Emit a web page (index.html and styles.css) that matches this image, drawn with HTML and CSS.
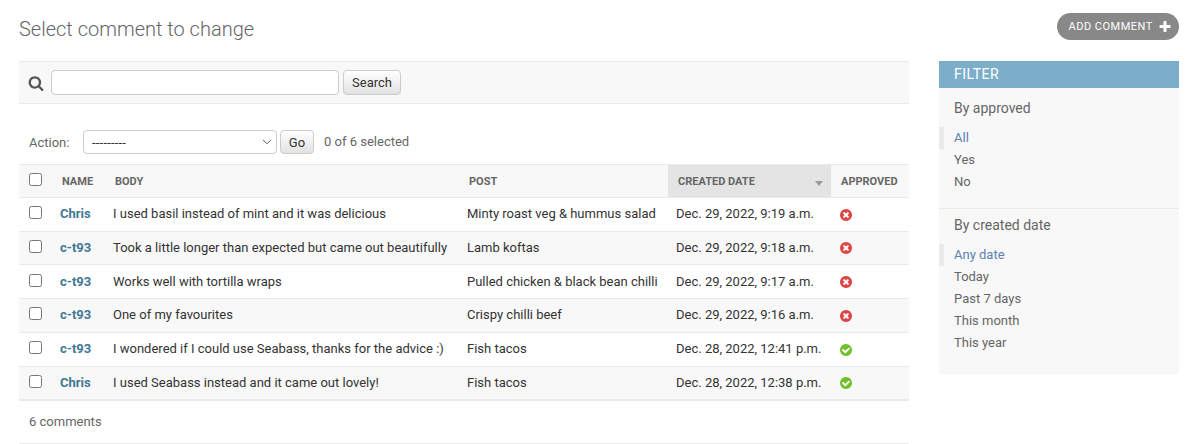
FILE: index.html
```html
<!DOCTYPE html>
<html lang="en">
<head>
<meta charset="utf-8">
<title>Select comment to change</title>
<link rel="stylesheet" href="styles.css">
</head>
<body>
<svg class="defs" aria-hidden="true">
  <symbol id="no" viewBox="0 0 1792 1792"><path d="M1277 1122q0-26-19-45l-181-181 181-181q19-19 19-45 0-27-19-46l-90-90q-19-19-46-19-26 0-45 19l-181 181-181-181q-19-19-45-19-27 0-46 19l-90 90q-19 19-19 46 0 26 19 45l181 181-181 181q-19 19-19 45 0 27 19 46l90 90q19 19 46 19 26 0 45-19l181-181 181 181q19 19 45 19 27 0 46-19l90-90q19-19 19-46zm387-226q0 209-103 385.5t-279.5 279.5-385.5 103-385.5-103-279.5-279.5-103-385.5 103-385.5 279.5-279.5 385.5-103 385.5 103 279.5 279.5 103 385.5z"/></symbol>
  <symbol id="yes" viewBox="0 0 1792 1792"><path d="M1412 734q0-28-18-46l-91-90q-19-19-45-19t-45 19l-408 407-226-226q-19-19-45-19t-45 19l-91 90q-18 18-18 46 0 27 18 45l362 362q19 19 45 19 27 0 46-19l543-543q18-18 18-45zm252 162q0 209-103 385.5t-279.5 279.5-385.5 103-385.5-103-279.5-279.5-103-385.5 103-385.5 279.5-279.5 385.5-103 385.5 103 279.5 279.5 103 385.5z"/></symbol>
</svg>
<header class="page-head">
  <h1 class="title">Select comment to change</h1>
  <a class="add">Add comment<svg class="add-icon" viewBox="0 0 1792 1792"><path d="M1600 736v192q0 40-28 68t-68 28h-416v416q0 40-28 68t-68 28h-192q-40 0-68-28t-28-68v-416h-416q-40 0-68-28t-28-68v-192q0-40 28-68t68-28h416v-416q0-40 28-68t68-28h192q40 0 68 28t28 68v416h416q40 0 68 28t28 68z"/></svg></a>
</header>
<div class="columns">
  <main class="changelist">
    <form class="toolbar">
      <svg class="search-icon" viewBox="0 0 1792 1792"><path d="M1216 832q0-185-131.5-316.5t-316.5-131.5-316.5 131.5-131.5 316.5 131.5 316.5 316.5 131.5 316.5-131.5 131.5-316.5zm512 832q0 52-38 90t-90 38q-54 0-90-38l-343-342q-179 124-399 124-143 0-273.5-55.5t-225-150-150-225-55.5-273.5 55.5-273.5 150-225 225-150 273.5-55.5 273.5 55.5 225 150 150 225 55.5 273.5q0 220-124 399l343 343q37 37 37 90z"/></svg>
      <input class="search-input" type="text">
      <button class="button search-button" type="button">Search</button>
    </form>
    <div class="actions">
      <label class="action-label" for="action">Action:</label>
      <div class="select-wrap">
        <select class="select" id="action"><option>---------</option></select>
        <svg class="chevron" viewBox="0 0 10 6"><path d="M1 .8 5 4.8 9 .8"/></svg>
      </div>
      <button class="button go-button" type="button">Go</button>
      <span class="counter">0 of 6 selected</span>
    </div>
    <div class="table">
      <div class="row head">
        <span class="cell"><input class="check" type="checkbox"></span>
        <span class="cell">Name</span>
        <span class="cell">Body</span>
        <span class="cell">Post</span>
        <span class="cell sorted">Created date<i class="arrow"></i></span>
        <span class="cell">Approved</span>
      </div>
      <div class="row">
        <span class="cell"><input class="check" type="checkbox"></span>
        <a class="cell name">Chris</a>
        <span class="cell body">I used basil instead of mint and it was delicious</span>
        <span class="cell">Minty roast veg &amp; hummus salad</span>
        <span class="cell">Dec. 29, 2022, 9:19 a.m.</span>
        <span class="cell"><svg class="status no"><use href="#no"/></svg></span>
      </div>
      <div class="row alt">
        <span class="cell"><input class="check" type="checkbox"></span>
        <a class="cell name">c-t93</a>
        <span class="cell body">Took a little longer than expected but came out beautifully</span>
        <span class="cell">Lamb koftas</span>
        <span class="cell">Dec. 29, 2022, 9:18 a.m.</span>
        <span class="cell"><svg class="status no"><use href="#no"/></svg></span>
      </div>
      <div class="row">
        <span class="cell"><input class="check" type="checkbox"></span>
        <a class="cell name">c-t93</a>
        <span class="cell body">Works well with tortilla wraps</span>
        <span class="cell">Pulled chicken &amp; black bean chilli</span>
        <span class="cell">Dec. 29, 2022, 9:17 a.m.</span>
        <span class="cell"><svg class="status no"><use href="#no"/></svg></span>
      </div>
      <div class="row alt">
        <span class="cell"><input class="check" type="checkbox"></span>
        <a class="cell name">c-t93</a>
        <span class="cell body">One of my favourites</span>
        <span class="cell">Crispy chilli beef</span>
        <span class="cell">Dec. 29, 2022, 9:16 a.m.</span>
        <span class="cell"><svg class="status no"><use href="#no"/></svg></span>
      </div>
      <div class="row">
        <span class="cell"><input class="check" type="checkbox"></span>
        <a class="cell name">c-t93</a>
        <span class="cell body">I wondered if I could use Seabass, thanks for the advice :)</span>
        <span class="cell">Fish tacos</span>
        <span class="cell">Dec. 28, 2022, 12:41 p.m.</span>
        <span class="cell"><svg class="status yes"><use href="#yes"/></svg></span>
      </div>
      <div class="row alt">
        <span class="cell"><input class="check" type="checkbox"></span>
        <a class="cell name">Chris</a>
        <span class="cell body">I used Seabass instead and it came out lovely!</span>
        <span class="cell">Fish tacos</span>
        <span class="cell">Dec. 28, 2022, 12:38 p.m.</span>
        <span class="cell"><svg class="status yes"><use href="#yes"/></svg></span>
      </div>
    </div>
    <p class="paginator">6 comments</p>
  </main>
  <aside class="filter">
    <h2 class="filter-title">Filter</h2>
    <h3 class="filter-heading">By approved</h3>
    <ul class="filter-list first">
      <li class="selected">All</li>
      <li>Yes</li>
      <li>No</li>
    </ul>
    <h3 class="filter-heading">By created date</h3>
    <ul class="filter-list">
      <li class="selected">Any date</li>
      <li>Today</li>
      <li>Past 7 days</li>
      <li>This month</li>
      <li>This year</li>
    </ul>
  </aside>
</div>
</body>
</html>
```
FILE: styles.css
```css
* { box-sizing: border-box; }
body {
  margin: 0;
  padding: 13px 19px 0;
  height: 444px;
  overflow: hidden;
  background: #fff;
  color: #333;
  font: 13px/17px Roboto, sans-serif;
}
.defs { position: absolute; width: 0; height: 0; }
.page-head { display: flex; justify-content: space-between; align-items: flex-start; height: 48px; }
.title { margin: 4px 0 0; font-size: 20px; line-height: 24px; font-weight: 300; color: #666; }
.add {
  display: flex;
  align-items: center;
  justify-content: space-between;
  width: 122px;
  height: 27px;
  padding: 0 7px 0 11.5px;
  border-radius: 14px;
  background: #888;
  color: #fff;
  font-size: 11px;
  letter-spacing: .5px;
  text-transform: uppercase;
}
.add-icon { width: 14px; height: 14px; fill: #fff; }
.columns { display: grid; grid-template-columns: 890px 240px; gap: 30px; align-items: start; }
.toolbar {
  display: flex;
  align-items: center;
  height: 43px;
  margin: 0;
  padding-left: 9px;
  border-top: 1px solid #eaeaea;
  border-bottom: 1px solid #eaeaea;
  background: #f8f8f8;
}
.search-icon { width: 16px; height: 16px; margin: 0 7px 0 0; fill: #555; }
.search-input { width: 288px; height: 25px; margin: 0 4px 0 0; padding: 0 5px; border: 1px solid #ccc; border-radius: 4px; background: #fff; }
.button {
  padding: 0;
  border: 1px solid #ccc;
  border-radius: 4px;
  background: linear-gradient(#fff, #e2e2e2);
  color: #333;
  font: 13px/17px Roboto, sans-serif;
}
.search-button { width: 58px; height: 25px; }
.actions { display: flex; align-items: center; height: 60px; padding: 16px 0 0 10px; color: #666; }
.action-label { width: 54px; }
.select-wrap { position: relative; width: 194px; height: 24px; margin-right: 3px; }
.select {
  appearance: none;
  width: 100%;
  height: 100%;
  padding: 0 8px;
  border: 1px solid #ccc;
  border-radius: 4px;
  background: #fff;
  color: #333;
  font: 13px/17px Roboto, sans-serif;
  letter-spacing: .2px;
}
.chevron { position: absolute; right: 5px; top: 9px; width: 10px; height: 6px; fill: none; stroke: #555; stroke-width: 1; }
.go-button { width: 34px; height: 24px; margin-right: 10px; }
.counter { padding-bottom: 2px; }
.row { display: grid; grid-template-columns: 33px 53px 354px 209px 163px 78px; height: 33.75px; border-bottom: 1px solid #eaeaea; }
.cell { display: flex; align-items: center; padding: 0 8px 1px; white-space: nowrap; }
.cell:first-child { padding: 0 0 3px 10px; }
.alt { background: #f8f8f8; }
.head { border-top: 1px solid #eaeaea; background: #f8f8f8; color: #666; font-size: 11px; font-weight: 700; text-transform: uppercase; }
.head .cell { padding: 1px 8px 0 10px; }
.head .cell:first-child { padding: 0 0 2px 10px; }
.head .sorted { justify-content: space-between; background: #e4e4e4; }
.arrow { margin-top: 5px; border: 4px solid transparent; border-top: 5px solid #999; border-bottom: 0; }
.check { width: 13px; height: 13px; margin: 0; }
.name { color: #417893; font-weight: 700; }
.status { width: 14px; height: 14px; margin-top: 2px; }
.no { fill: #dd4646; }
.yes { fill: #70bf2b; }
.paginator { height: 44px; margin: 0; padding: 12px 10px; border-top: 1px solid #eaeaea; border-bottom: 1px solid #eaeaea; color: #666; }
.filter { height: 313px; background: #f8f8f8; color: #666; }
.filter-title { height: 27px; margin: 0 0 12px; padding-left: 15px; background: #7caeca; color: #fff; font-size: 14px; line-height: 27px; font-weight: 400; letter-spacing: .5px; text-transform: uppercase; }
.filter-heading { margin: 0; padding-left: 15px; font-size: 14px; line-height: 17px; font-weight: 400; }
.filter-list { margin: 10px 0 0; padding: 0; list-style: none; line-height: 22px; }
.filter-list li { padding-left: 15px; }
.filter-list .selected { padding-left: 10px; border-left: 5px solid #eaeaea; color: #5b80b2; }
.first { height: 82px; margin-bottom: 8px; border-bottom: 1px solid #eaeaea; }
```
